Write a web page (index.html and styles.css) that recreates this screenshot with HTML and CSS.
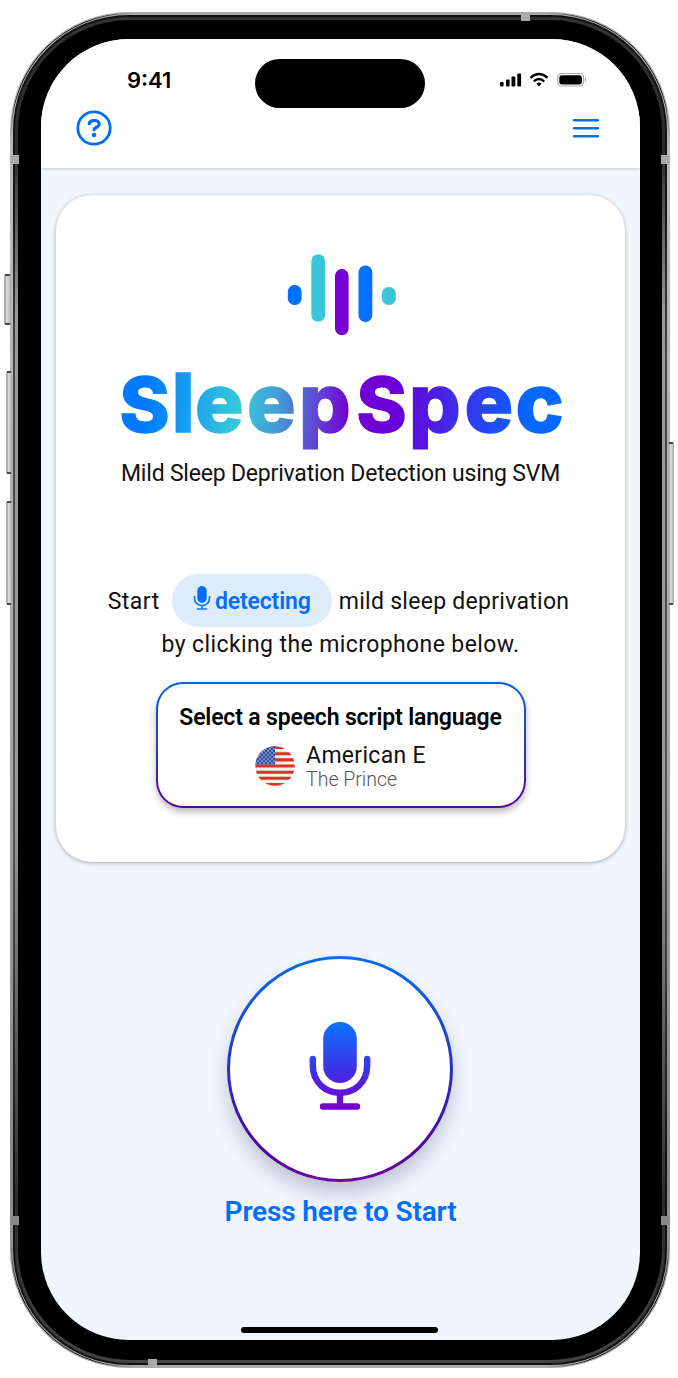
FILE: index.html
```html
<!DOCTYPE html>
<html lang="en">
<head>
<meta charset="utf-8">
<title>SleepSpec</title>
<link rel="stylesheet" href="styles.css">
</head>
<body>
<div class="phone">
  <i class="key key-silent"></i><i class="key key-up"></i><i class="key key-down"></i><i class="key key-power"></i>
  <div class="rim"><div class="groove"><div class="trim"><div class="bezel"><div class="screen">
    <header class="header">
      <div class="status">
        <span class="time">9:41</span>
        <span class="island"></span>
        <svg class="signals" width="88" height="16" viewBox="0 0 88 16">
          <rect x="1" y="10" width="3.6" height="4.5" rx="1"/><rect x="7" y="7.5" width="3.6" height="7" rx="1"/><rect x="12.5" y="4.500" width="3.800" height="10" rx="1"/><rect x="18.300" y="1.500" width="3.800" height="13" rx="1"/>
          <g fill="none" stroke="#000" stroke-width="2.400"><path d="M31.500 5.900Q39.900 -1.700 48.500 5.900"/><path d="M34.800 9.300Q39.900 4.700 45.200 9.300"/></g>
          <path d="M37.300 11.600Q39.900 9.600 42.700 11.600L40 14.500Z"/>
          <rect x="58.600" y="1.500" width="26" height="12.500" rx="4" fill="none" stroke="#aaa" stroke-width="1.200"/><rect x="60.300" y="3.200" width="22.600" height="9.200" rx="2.600"/><path d="M86 5.500q2.500 2.200 0 4.500z" fill="#aaa"/>
        </svg>
      </div>
      <div class="toolbar">
        <svg width="36" height="36" viewBox="0 0 36 36" fill="none" stroke="#006ef0"><circle cx="18" cy="18" r="16.200" stroke-width="2.800"/><path d="M13.200 13.700C13.800 9.300 23.200 9.500 23.200 14C23.200 17.500 18 17 18 19.800" stroke-width="3.200" stroke-linecap="round"/><circle cx="18" cy="25" r="2.300" fill="#006ef0" stroke="none"/></svg>
        <svg width="28" height="22" viewBox="0 0 28 22" stroke="#0a6fe3" stroke-width="2.400" stroke-linecap="round"><path d="M2 3.200H26M2 11.200H26M2 19.200H26"/></svg>
      </div>
    </header>
    <main class="main">
      <section class="card">
        <svg class="brand" width="460" height="210" viewBox="111 246 460 210" role="img">
          <defs><linearGradient id="word" gradientUnits="userSpaceOnUse" x1="122" y1="380" x2="560" y2="420"><stop offset=".06" stop-color="#007bff"/><stop offset=".27" stop-color="#37c9d8"/><stop offset=".36" stop-color="#459bd6"/><stop offset=".52" stop-color="#7400d1"/><stop offset=".63" stop-color="#6900da"/><stop offset=".93" stop-color="#0568ff"/></linearGradient></defs>
          <rect x="287.800" y="285" width="13.800" height="20" rx="6.600" fill="#0070ff"/><rect x="311.300" y="254.300" width="13.800" height="67.500" rx="6.900" fill="#39c7d8"/><rect x="335" y="269" width="13.600" height="66.300" rx="6.800" fill="#7600d4"/><rect x="358.500" y="265.500" width="13.800" height="56.500" rx="6.900" fill="#0070ff"/><rect x="382" y="287" width="13.800" height="18" rx="6.600" fill="#39c7d8"/>
          <text class="wordmark" y="432" x="119.500 171.800 195 247 299 356.500 409 464.500 515.500" fill="url(#word)" stroke="url(#word)"><tspan class="cap">S</tspan>leep<tspan class="cap">S</tspan>pec</text>
        </svg>
        <p class="tagline">Mild Sleep Deprivation Detection using SVM</p>
        <div class="instruction">
          <span>Start</span>
          <span class="pill"><svg width="18" height="25" viewBox="0 0 18 25"><rect x="4.300" y="0" width="9.400" height="17" rx="4.700" fill="#006fff"/><path d="M1.500 10.500V12.200C1.500 22 16.500 22 16.500 12.200V10.500M9 19.500V23M4.500 23H13.500" fill="none" stroke="#1676ef" stroke-width="1.700" stroke-linecap="round"/></svg><b>detecting</b></span>
          <span class="after">mild sleep deprivation</span>
        </div>
        <p class="instruction-end">by clicking the microphone below.</p>
        <div class="language">
          <h2>Select a speech script language</h2>
          <div class="choice">
            <svg class="flag" width="40" height="40" viewBox="0 0 40 40"><defs><clipPath id="disc"><circle cx="20" cy="20" r="19.700"/></clipPath><pattern id="stars" width="4" height="4" patternUnits="userSpaceOnUse"><circle cx="1" cy="1" r=".75" fill="#eef"/><circle cx="3" cy="3" r=".75" fill="#eef"/></pattern></defs><g clip-path="url(#disc)"><path fill="#f6efef" d="M0 0H40V40H0z"/><path stroke="#df3025" stroke-width="3.080" d="M0 1.500H40M0 7.700H40M0 13.900H40M0 20H40M0 26.200H40M0 32.300H40M0 38.500H40"/><path fill="#2e4fa0" d="M0 0H20V18.500H0z"/><path fill="url(#stars)" d="M0 0H20V18H0z"/></g></svg>
            <div><p class="lang-name">American E</p><p class="lang-text">The Prince</p></div>
          </div>
        </div>
      </section>
      <div class="record">
        <svg width="62" height="90" viewBox="0 0 62 90"><defs><linearGradient id="mic" gradientUnits="userSpaceOnUse" x1="0" y1="0" x2="0" y2="88"><stop stop-color="#0875ff"/><stop offset=".6" stop-color="#442be5"/><stop offset="1" stop-color="#7800ce"/></linearGradient></defs><rect x="14.200" y="1" width="33.600" height="61" rx="16.800" fill="url(#mic)"/><path d="M3.800 38V44C3.800 81 58.200 81 58.200 44V38M31 72V85M14 85.500H48" fill="none" stroke="url(#mic)" stroke-width="6.400" stroke-linecap="round"/></svg>
      </div>
      <p class="start">Press here to Start</p>
      <div class="home"></div>
    </main>
  </div></div></div></div></div>
  <i class="band band-top"></i><i class="band band-bottom"></i><i class="band band-l1"></i><i class="band band-r1"></i><i class="band band-l2"></i><i class="band band-r2"></i>
</div>
</body>
</html>
```
FILE: styles.css
```css
* { box-sizing: border-box; }
body, p, h2 { margin: 0; }
body { background: #fff; font-family: Roboto, sans-serif; color: #111; }
.phone { position: relative; width: 660px; height: 1356px; padding-top: .1px; margin: 11.5px 0 0 9.5px; }
.rim { height: 100%; padding: 3px; border-radius: 119px; background: linear-gradient(#aaa, #bbb 12%, #aaa 50%, #888 85%, #aaa); }
/* dark reflections round the outer corners */
.phone::after { content: ""; position: absolute; inset: 1px; border: 1.4px solid #000; border-radius: 118px; pointer-events: none;
  mask: radial-gradient(circle at 35px 35px, #000 50px, transparent 95px), radial-gradient(circle at calc(100% - 35px) 35px, #000 50px, transparent 95px), radial-gradient(circle at 35px calc(100% - 35px), #000 50px, transparent 95px), radial-gradient(circle at calc(100% - 35px) calc(100% - 35px), #000 50px, transparent 95px); }
.groove { height: 100%; padding: 2px; border-radius: 116px; background: linear-gradient(#111, #151515 15%, #444 25%, #555 60%, #111 85%); }
.trim { height: 100%; padding: 3px; border-radius: 114px; background: linear-gradient(#333, #2c2c2c 10%, #999 22%, #999 60%, #2c2c2c 88%, #444); }
.bezel { height: 100%; padding: 19.500px 21.500px 20px 23.500px; border-radius: 111px; background: #000; }
.screen { height: 100%; border-radius: 88px; overflow: hidden; background: #f0f5fe; display: flex; flex-direction: column; }
.header { height: 129px; background: #fff; box-shadow: 0 1px 3px #c3c8d2; flex: none; }
.status { display: flex; align-items: center; padding: 20px 53px 0 86px; height: 69px; }
.time { width: 128px; font: 600 22px/28px Inter, sans-serif; letter-spacing: 0; color: #000; margin-top: -7px; }
.island { width: 170px; height: 49px; border-radius: 25px; background: #000; }
.signals { margin: -8px 0 0 auto; }
.toolbar { display: flex; justify-content: space-between; align-items: center; padding: 0 40px 0 35px; height: 40px; }
.main { flex: 1; display: flex; flex-direction: column; align-items: center; padding-top: 27px; }
.card { width: 569px; height: 667px; flex: none; border-radius: 36px; background: #fff; box-shadow: 0 1px 4px #aaa; display: flex; flex-direction: column; align-items: center; padding-top: 51px; }
.brand { flex: none; }
.wordmark { font: 800 81px Inter, sans-serif; stroke-width: 1.4px; }
.cap { font-size: 76px; }
.tagline { font-size: 23px; line-height: 28px; margin-top: 4px; letter-spacing: -.2px; white-space: nowrap; }
.instruction { display: flex; align-items: center; margin: 86px 4px 0 0; font-size: 23px; letter-spacing: .5px; white-space: nowrap; height: 53px; }
.instruction > span:not(.pill) { padding-top: 1px; }
.after { letter-spacing: .28px; }
.pill { display: flex; align-items: center; justify-content: center; width: 160px; height: 53px; border-radius: 27px; background: #deebfd; color: #006fff; margin: 0 7px 0 12px; gap: 4px; letter-spacing: 0; }
.pill svg { margin-top: -4px; }
.pill b { font-weight: 600; padding-top: 2px; letter-spacing: -.15px; }
.instruction-end { margin-top: 4px; font-size: 23px; line-height: 28px; letter-spacing: .4px; white-space: nowrap; }
.language { width: 370px; height: 126px; margin-top: 23px; padding-top: 20px; border: 2px solid transparent; border-radius: 27px; background: linear-gradient(#fff, #fff) padding-box, linear-gradient(#0864d6, #263fc0 50%, #56009e) border-box; box-shadow: 0 4px 7px #bbb; text-align: center; }
.language h2 { font-size: 23px; line-height: 27px; font-weight: 600; letter-spacing: -.17px; color: #000; white-space: nowrap; }
.choice { display: flex; justify-content: center; gap: 11px; margin-top: 12px; text-align: left; align-items: center; }
.flag { margin-top: -3px; }
.lang-name { font-size: 23px; line-height: 25px; letter-spacing: .3px; white-space: nowrap; }
.lang-text { font-size: 19.500px; line-height: 24px; font-weight: 300; color: #555; }
.record { display: flex; align-items: center; justify-content: center; width: 226px; height: 226px; margin: 93.5px 1px 0 0; flex: none; border: 3px solid transparent; border-radius: 50%; background: linear-gradient(#fff, #fff) padding-box, linear-gradient(#056ded, #2732c6 48%, #530097 90%, #7007ad) border-box; box-shadow: 0 12px 20px -2px rgba(30, 40, 65, .26); }
.record svg { margin-top: -6px; }
.start { margin-top: 12px; font-size: 28px; line-height: 36px; font-weight: 600; letter-spacing: -.15px; color: #006fff; white-space: nowrap; }
.home { width: 197px; height: 6px; border-radius: 3px; background: #000; margin: auto 2px 7px 0; }
.key { position: absolute; background: linear-gradient(90deg, #999, #ddd 35%, #bbb); border: 1px solid #aaa; border-top: 2px solid #444; border-bottom: 2px solid #444; border-radius: 2px; }
.key-silent { left: -5.500px; top: 262px; width: 7px; height: 51px; }
.key-up { left: -4px; top: 359px; width: 6px; height: 103px; }
.key-down { left: -4px; top: 489px; width: 6px; height: 104px; }
.key-power { right: -4px; top: 430px; width: 6px; height: 163px; }
.band { position: absolute; background: #aaa; }
.band-top { left: 511.500px; top: 1px; width: 9px; height: 8px; }
.band-bottom { left: 138.500px; bottom: 1px; width: 9px; height: 8px; }
.band-l1, .band-l2 { left: 0; width: 9px; height: 9px; }
.band-r1, .band-r2 { right: 0; width: 9px; height: 9px; }
.band-l1, .band-r1 { top: 143px; }
.band-l2, .band-r2 { top: 1204px; background: #888; }
```
